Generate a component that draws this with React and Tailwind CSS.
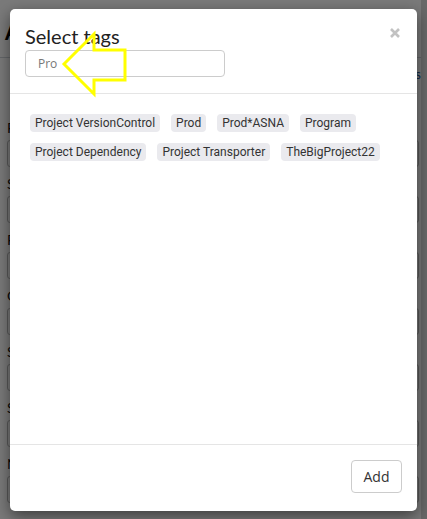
import { useState } from "react";

const tags = [
  "Project VersionControl",
  "Prod",
  "Prod*ASNA",
  "Program",
  "Project Dependency",
  "Project Transporter",
  "TheBigProject22",
];

const fields = ["Field", "Status", "Family", "Category", "Site", "Source", "Notes"];

export default function App() {
  const [query, setQuery] = useState("Pro");

  return (
    <div className="relative flex h-[519px] w-[427px] overflow-hidden bg-white font-['Lato',sans-serif]">
      <BackgroundPage />
      <div className="w-[6px] bg-[#dcdcdc]" />
      <div className="absolute inset-0 bg-black/[0.52]" />
      <TagModal query={query} setQuery={setQuery} />
      <Arrow />
    </div>
  );
}

function BackgroundPage() {
  return (
    <div className="flex w-[421px] flex-col">
      <h1 className="h-[58px] border-b border-gray-300 px-[5px] pt-[19px] text-[22px] font-bold leading-[26px] text-black">
        Add Item
      </h1>
      <div className="flex justify-end pt-[8px] text-[13px] leading-[16px] text-[#1e5a9c]">
        Select tags
      </div>
      <div className="flex flex-col gap-[9px] pl-[7px] pr-[2px] pt-[38px]">
        {fields.map((f) => (
          <div key={f} className="flex flex-col gap-[4px]">
            <label className="text-[14px] leading-[16px] text-[#111]">{f}</label>
            <div className="h-[27px] rounded-[3px] border border-[#bbb] bg-white" />
          </div>
        ))}
      </div>
    </div>
  );
}

function TagModal({ query, setQuery }) {
  return (
    <div className="absolute left-[10px] top-[9px] flex h-[502px] w-[407px] flex-col rounded-[5px] bg-white shadow-[0_5px_15px_rgba(0,0,0,0.5)]">
      <div className="relative border-b border-[#e5e5e5] px-[15px] pb-[16px] pt-[15px]">
        <h4 className="text-[20px] leading-[24px] text-[#222]">Select tags</h4>
        <input
          value={query}
          onChange={(e) => setQuery(e.target.value)}
          className="mt-[2px] h-[27px] w-[200px] rounded-[4px] border border-[#ccc] px-[12px] font-['Open_Sans',sans-serif] text-[12px] text-[#777] outline-none"
        />
        <button className="absolute right-[17px] top-[19px] text-[#c2c2c2]">
          <svg width="10" height="10" viewBox="0 0 10 10">
            <path d="M1 1 L9 9 M9 1 L1 9" stroke="currentColor" strokeWidth="2.6" />
          </svg>
        </button>
      </div>
      <div className="flex-1 px-[20px] pt-[20px]">
        <div className="flex flex-wrap gap-x-[11px] gap-y-[11px] font-['Roboto',sans-serif]">
          {tags.map((t) => (
            <span
              key={t}
              className="h-[18px] rounded-[4px] bg-[#eaeaee] px-[5px] text-[12px] leading-[18px] text-[#333]"
            >
              {t}
            </span>
          ))}
        </div>
      </div>
      <div className="flex justify-end border-t border-[#e5e5e5] pb-[18px] pr-[15px] pt-[15px]">
        <button className="h-[33px] w-[51px] rounded-[4px] border border-[#ccc] bg-white font-['Open_Sans',sans-serif] text-[14px] text-[#333]">
          Add
        </button>
      </div>
    </div>
  );
}

function Arrow() {
  return (
    <svg className="absolute left-0 top-0" width="140" height="110" viewBox="0 0 140 110">
      <polygon
        points="64,64 94,34 94,50 125,50 125,80 94,80 94,94"
        fill="none"
        stroke="#ffff00"
        strokeWidth="3"
        strokeLinejoin="miter"
      />
    </svg>
  );
}
